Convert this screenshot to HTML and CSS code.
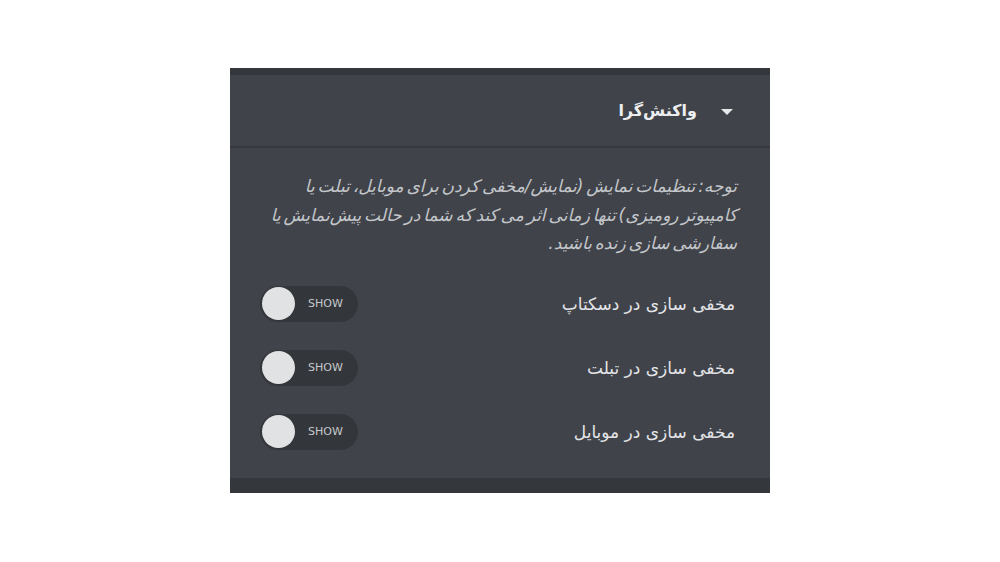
FILE: index.html
```html
<!DOCTYPE html>
<html lang="fa">
<head>
<meta charset="utf-8">
<link rel="stylesheet" href="styles.css">
</head>
<body>
<div class="panel" dir="rtl">
  <div class="topbar"></div>
  <div class="header">
    <span class="caret"></span>
    <span class="title">واکنش‌گرا</span>
  </div>
  <div class="body">
    <p class="note">توجه: تنظیمات نمایش (نمایش/مخفی کردن برای موبایل، تبلت یا کامپیوتر رومیزی) تنها زمانی اثر می کند که شما در حالت پیش‌نمایش یا سفارشی سازی زنده باشید.</p>
    <div class="row">
      <span class="label">مخفی سازی در دسکتاپ</span>
      <span class="toggle"><span class="knob"></span><span class="show">SHOW</span></span>
    </div>
    <div class="row">
      <span class="label">مخفی سازی در تبلت</span>
      <span class="toggle"><span class="knob"></span><span class="show">SHOW</span></span>
    </div>
    <div class="row">
      <span class="label">مخفی سازی در موبایل</span>
      <span class="toggle"><span class="knob"></span><span class="show">SHOW</span></span>
    </div>
  </div>
  <div class="bottombar"></div>
</div>
</body>
</html>
```
FILE: styles.css
```css
html, body {
  margin: 0;
  padding: 0;
  background: #ffffff;
}
body {
  width: 1000px;
  height: 562px;
  font-family: "DejaVu Sans", "Noto Sans", sans-serif;
}
.panel {
  width: 540px;
  margin: 68px 0 0 230px;
  background: #404349;
  display: flex;
  flex-direction: column;
}
.topbar {
  height: 7px;
  background: #34373c;
}
.header {
  height: 71px;
  display: flex;
  align-items: center;
  gap: 24px;
  padding-right: 37px;
  border-bottom: 2px solid #37393e;
}
.caret {
  width: 0;
  height: 0;
  border-left: 6px solid transparent;
  border-right: 6px solid transparent;
  border-top: 6px solid #e6e7e9;
  margin-top: 2px;
}
.title {
  color: #eceef0;
  font-weight: bold;
  font-size: 16px;
}
.body {
  padding: 24px 33px 0 30px;
  height: 306px;
}
.note {
  margin: 0 0 14px;
  padding-left: 2px;
  color: #c3c6ca;
  font-size: 17px;
  font-style: italic;
  line-height: 28.5px;
  word-spacing: -2.5px;
}
.row {
  height: 64px;
  display: flex;
  align-items: center;
  justify-content: space-between;
}
.label {
  color: #e3e5e8;
  font-size: 17px;
  margin-right: 2px;
}
.toggle {
  direction: ltr;
  width: 98px;
  height: 36px;
  border-radius: 18px;
  background: #33363a;
  display: flex;
  align-items: center;
  box-sizing: border-box;
  padding-left: 2px;
}
.knob {
  width: 33px;
  height: 33px;
  border-radius: 50%;
  background: #e1e2e4;
}
.show {
  margin-left: 13px;
  color: #c6c9cd;
  font-size: 11px;
  font-family: "DejaVu Sans", sans-serif;
}
.bottombar {
  height: 15px;
  background: #34373c;
}
```
